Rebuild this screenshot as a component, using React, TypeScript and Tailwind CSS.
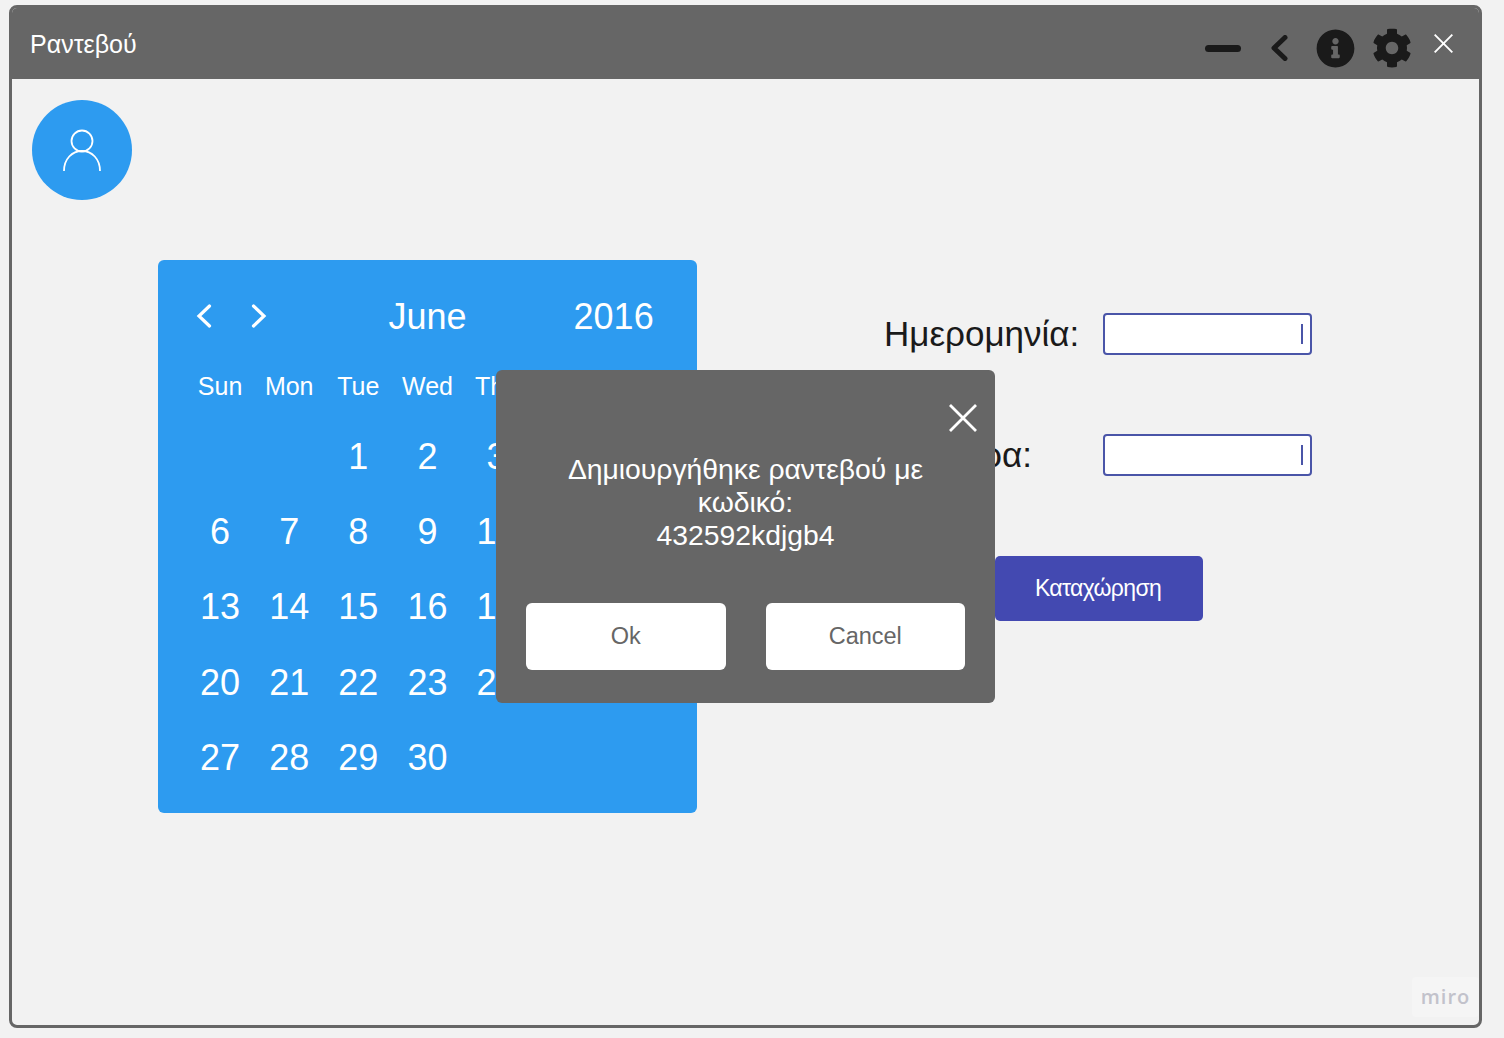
import React from 'react';
import { FaCog, FaInfoCircle } from 'react-icons/fa';

const weekdays = ['Sun', 'Mon', 'Tue', 'Wed', 'Thu', 'Fri', 'Sat'];
const days = [
  '', '', '1', '2', '3', '4', '5',
  '6', '7', '8', '9', '10', '11', '12',
  '13', '14', '15', '16', '17', '18', '19',
  '20', '21', '22', '23', '24', '25', '26',
  '27', '28', '29', '30', '', '', '',
];

const Chevron = ({ dir, className }: { dir: 'left' | 'right'; className: string }) => (
  <svg viewBox="0 0 16 24" fill="none" className={className}>
    <path
      d={dir === 'left' ? 'M13.5 2 L3 12 L13.5 22' : 'M2.5 2 L13 12 L2.5 22'}
      stroke="currentColor"
      strokeWidth="3.2"
      strokeLinecap="round"
      strokeLinejoin="miter"
    />
  </svg>
);

const CloseIcon = ({ className }: { className: string }) => (
  <svg viewBox="0 0 28 28" fill="none" className={className}>
    <path d="M1 1 L27 27 M27 1 L1 27" stroke="currentColor" strokeWidth="2.8" />
  </svg>
);

const Calendar = () => (
  <div className="w-[539px] h-[553px] shrink-0 bg-[#2d9bf0] rounded-md text-white pt-[35px] px-[27.5px]">
    <div className="flex items-center h-[42px]">
      <Chevron dir="left" className="w-[16px] h-[24px] ml-[10px]" />
      <Chevron dir="right" className="w-[16px] h-[24px] ml-[39px]" />
      <span className="text-[36px] ml-[122px] mt-[2px]">June</span>
      <span className="text-[36px] ml-[107px] mt-[2px]">2016</span>
    </div>
    <div className="grid grid-cols-7 mt-[34px] h-[30px]">
      {weekdays.map((d) => (
        <div key={d} className="text-center text-[25px] leading-[30px]">{d}</div>
      ))}
    </div>
    <div className="grid grid-cols-7 auto-rows-[75.4px] mt-[18px]">
      {days.map((d, i) => (
        <div key={i} className="flex items-center justify-center text-[36px]">{d}</div>
      ))}
    </div>
  </div>
);

const DateField = () => (
  <div className="w-[209px] h-[42px] bg-white border-2 border-[#4a55a8] rounded-[4px] flex items-center justify-end pr-[7px]">
    <span className="w-[2px] h-[20px] bg-[#4a55a8]" />
  </div>
);

const Dialog = () => (
  <div className="absolute left-[484px] top-[362px] w-[499px] h-[333px] bg-[#666666] rounded-md text-white px-[30px] pt-[34px] z-10">
    <div className="flex justify-end -mr-[12px]">
      <CloseIcon className="w-[28px] h-[28px]" />
    </div>
    <p className="mt-[21px] text-center text-[28.3px] leading-[33px] px-[30px]">
      Δημιουργήθηκε ραντεβού με κωδικό:
      <br />
      432592kdjgb4
    </p>
    <div className="flex gap-[40px] mt-[51px]">
      <button className="w-[200px] h-[67px] pt-[1px] bg-white rounded-md text-[#666666] text-[23.5px]">Ok</button>
      <button className="w-[200px] h-[67px] pt-[1px] bg-white rounded-md text-[#666666] text-[23.5px]">Cancel</button>
    </div>
  </div>
);

export default function App() {
  return (
    <div className="min-h-[1038px] bg-[#f2f2f2] pt-[5px] pl-[9px] font-['Liberation_Sans',sans-serif]">
      <div className="relative w-[1473px] h-[1023px] border-[3px] border-[#666666] rounded-lg bg-[#f2f2f2] overflow-hidden">
        <div className="h-[71px] bg-[#666666] flex items-center pl-[18px] text-white">
          <span className="text-[25px] mt-[2px]">Ραντεβού</span>
          <div className="ml-auto flex items-center mt-[9px] text-[#1a1a1a]">
            <span className="w-[36px] h-[7px] bg-[#1a1a1a] rounded-full" />
            <svg viewBox="0 0 18 26" fill="none" className="w-[18px] h-[26px] ml-[29px]">
              <path d="M15 2.5 L4 13 L15 23.5" stroke="currentColor" strokeWidth="5" strokeLinecap="round" strokeLinejoin="round" />
            </svg>
            <FaInfoCircle className="w-[39px] h-[39px] ml-[28px]" />
            <FaCog className="w-[40px] h-[40px] ml-[17px]" />
          </div>
          <CloseIcon className="w-[19px] h-[19px] ml-[22px] mr-[26px] -mt-[1px]" />
        </div>

        <div className="pt-[21px] pl-[20px]">
          <div className="w-[100px] h-[100px] rounded-full bg-[#2d9bf0] flex items-center justify-center">
            <svg viewBox="0 0 100 100" fill="none" className="w-[100px] h-[100px]">
              <circle cx="50" cy="41" r="10.5" stroke="white" strokeWidth="1.8" />
              <path d="M32 71 C32 59 40 51 50 51 C60 51 68 59 68 71" stroke="white" strokeWidth="1.8" />
            </svg>
          </div>

          <div className="relative flex mt-[60px] ml-[126px]">
            <Calendar />
            <div className="ml-[187px] mt-[53px] text-[#1a1a1a]">
              <div className="flex items-center gap-[20px]">
                <span className="w-[199px] text-[35px] leading-[42px] whitespace-nowrap">Ημερομηνία:</span>
                <DateField />
              </div>
              <div className="flex items-center gap-[20px] mt-[79px]">
                <span className="w-[199px] pr-[51px] text-right text-[35px] leading-[42px]">Ώρα:</span>
                <DateField />
              </div>
              <button className="block w-[208px] h-[65px] ml-[111px] mt-[80px] pr-[2px] bg-[#4349b1] rounded-[5px] text-white text-[23px] tracking-[-0.65px]">
                Καταχώρηση
              </button>
            </div>
          </div>
        </div>

        <Dialog />

        <div className="absolute right-0 bottom-[8px] w-[67px] h-[40px] bg-[#f5f5f5] rounded flex items-center justify-center text-[#c2c2cb] text-[20px] font-semibold tracking-[1px] font-['Open_Sans',sans-serif]">
          miro
        </div>
      </div>
    </div>
  );
}
